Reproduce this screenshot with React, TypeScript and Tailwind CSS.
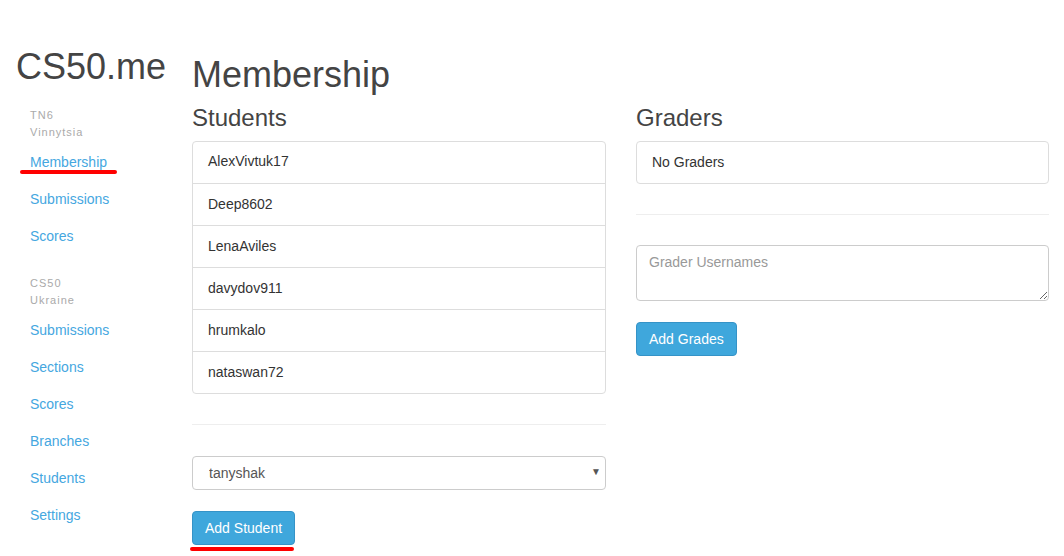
import { useState } from 'react'

const STUDENTS = ['AlexVivtuk17', 'Deep8602', 'LenaAviles', 'davydov911', 'hrumkalo', 'nataswan72']

const GROUPS = [
  { title: 'TN6', sub: 'Vinnytsia', links: ['Membership', 'Submissions', 'Scores'] },
  { title: 'CS50', sub: 'Ukraine', links: ['Submissions', 'Sections', 'Scores', 'Branches', 'Students', 'Settings'] },
]

function Sidebar() {
  return (
    <div className="w-[192px] shrink-0">
      <h1 className="mt-[47px] pl-4 text-[36px] leading-[40px] text-[#444]">CS50.me</h1>
      {GROUPS.map((g, gi) => (
        <div key={g.title} className="mt-[20px]">
          <div className="pl-[30px] text-[11px] leading-[17px] tracking-[1px] text-[#aaa]">
            <div>{g.title}</div>
            <div>{g.sub}</div>
          </div>
          <ul className="mt-[3px]">
            {g.links.map((l, i) => (
              <li key={l + i} className="relative h-[37px] pl-[30px] pt-[8px] text-[14px] leading-[20px]">
                <a href="#" className="text-[#45a7df]">{l}</a>
                {gi === 0 && i === 0 && (
                  <span className="absolute left-[20px] top-[26px] h-[4px] w-[97px] rounded-full bg-[#f00]" />
                )}
              </li>
            ))}
          </ul>
        </div>
      ))}
    </div>
  )
}

export default function App() {
  const [student, setStudent] = useState('tanyshak')
  return (
    <div className="flex min-h-[556px] bg-white text-[14px] text-[#333]" style={{ fontFamily: '"Liberation Sans", Arial, sans-serif' }}>
      <Sidebar />
      <div className="w-[857px] pt-[55px]">
        <h1 className="text-[36px] leading-[40px] text-[#444]">Membership</h1>
        <div className="mt-[10px] flex gap-[30px]">
          {/* Students column */}
          <div className="w-[414px]">
            <h3 className="text-[24px] leading-[26px] text-[#444]">Students</h3>
            <ul className="mt-[10px] rounded-[4px] border border-[#ddd]">
              {STUDENTS.map((s, i) => (
                <li key={s} className={`px-[15px] leading-[20px] ${i > 0 ? 'h-[42px] border-t border-[#ddd] py-[10px]' : 'h-[41px] pt-[9px]'} ${i === STUDENTS.length - 1 ? 'h-[41px]' : ''}`}>
                  {s}
                </li>
              ))}
            </ul>
            <hr className="mt-[30px] border-t border-[#eee]" />
            <div className="relative mt-[31px]">
              <select
                value={student}
                onChange={e => setStudent(e.target.value)}
                className="h-[34px] w-full appearance-none rounded-[4px] border border-[#ccc] bg-white px-[16px] text-[14px] text-[#555]"
              >
                <option value="tanyshak">tanyshak</option>
              </select>
              <span className="pointer-events-none absolute right-[5px] top-[8px] text-[10px] text-[#555]">▼</span>
            </div>
            <div className="relative mt-[21px] inline-block">
              <button className="h-[34px] rounded-[4px] border border-[#3593c7] bg-[#3fa7dc] px-[12px] text-[14px] text-white">
                Add Student
              </button>
              <span className="absolute left-[-2px] top-[36px] h-[4px] w-[104px] rounded-full bg-[#f00]" />
            </div>
          </div>
          {/* Graders column */}
          <div className="w-[413px]">
            <h3 className="text-[24px] leading-[26px] text-[#444]">Graders</h3>
            <div className="mt-[10px] h-[43px] rounded-[4px] border border-[#ddd] px-[15px] py-[10px] leading-[20px]">No Graders</div>
            <hr className="mt-[30px] border-t border-[#eee]" />
            <textarea
              placeholder="Grader Usernames"
              className="mt-[30px] block h-[56px] w-full rounded-[4px] border border-[#ccc] px-[12px] py-[6px] text-[14px] leading-[20px] placeholder:text-[#999]"
            />
            <button className="mt-[21px] h-[34px] rounded-[4px] border border-[#3593c7] bg-[#3fa7dc] px-[12px] text-[14px] text-white">
              Add Grades
            </button>
          </div>
        </div>
      </div>
    </div>
  )
}
